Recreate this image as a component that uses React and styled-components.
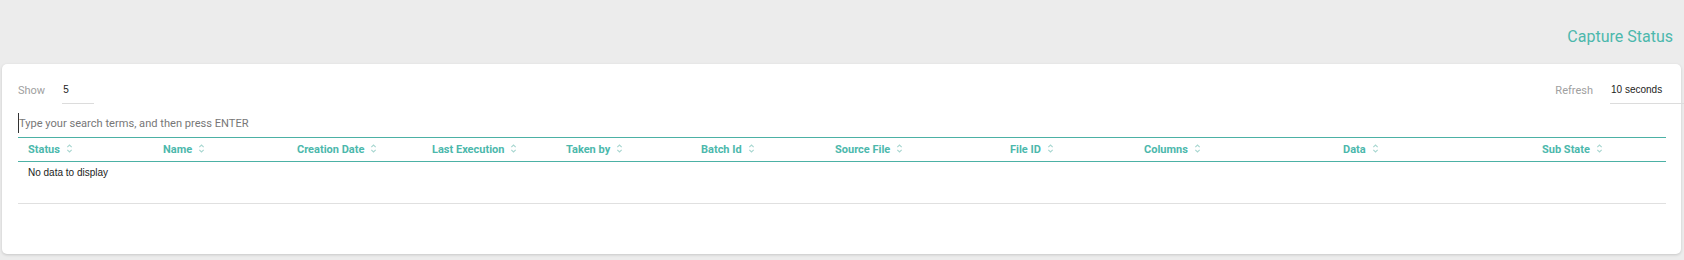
import React from 'react';
import styled, { createGlobalStyle } from 'styled-components';

const GlobalStyle = createGlobalStyle`
    body {
        margin: 0;
        background: #ececec;
        font-family: Roboto, "Liberation Sans", sans-serif;
    }
`;

const columns = [
    { label: 'Status', width: 135 },
    { label: 'Name', width: 134 },
    { label: 'Creation Date', width: 135 },
    { label: 'Last Execution', width: 134 },
    { label: 'Taken by', width: 135 },
    { label: 'Batch Id', width: 134 },
    { label: 'Source File', width: 175 },
    { label: 'File ID', width: 134 },
    { label: 'Columns', width: 199 },
    { label: 'Data', width: 199 },
    { label: 'Sub State', width: 134 },
];

function SortIcon() {
    return (
        <SortSvg viewBox="0 0 8 12" width="7" height="11">
            <path d="M1.5 4.5 L4 2 L6.5 4.5" />
            <path d="M1.5 7.5 L4 10 L6.5 7.5" />
        </SortSvg>
    );
}

function App() {
    return (
        <Page>
            <GlobalStyle />
            <TopBar>
                <Title>Capture Status</Title>
            </TopBar>
            <Card>
                <Toolbar>
                    <Group>
                        <Label>Show</Label>
                        <Select $w={32}>5</Select>
                    </Group>
                    <Group>
                        <Label>Refresh</Label>
                        <Select $w={74}>10 seconds</Select>
                    </Group>
                </Toolbar>
                <Search placeholder="Type your search terms, and then press ENTER" />
                <Table>
                    <colgroup>
                        {columns.map((c) => <Col key={c.label} $w={c.width} />)}
                    </colgroup>
                    <thead>
                        <tr>
                            {columns.map((c) => (
                                <Th key={c.label}>
                                    {c.label}
                                    <SortIcon />
                                </Th>
                            ))}
                        </tr>
                    </thead>
                    <tbody>
                        <tr>
                            <Empty colSpan={columns.length}>No data to display</Empty>
                        </tr>
                    </tbody>
                </Table>
                <Footer />
            </Card>
        </Page>
    );
}

const Page = styled.div`
    width: 1684px;
    height: 260px;
    overflow: hidden;
`;

const TopBar = styled.div`
    height: 64px;
    display: flex;
    justify-content: flex-end;
    align-items: center;
    padding-right: 11px;
    padding-top: 8px;
    box-sizing: border-box;
`;

const Title = styled.h1`
    margin: 0;
    font-size: 16px;
    font-weight: 400;
    color: #4cb8ac;
`;

const Card = styled.div`
    margin: 0 3px 0 2px;
    height: 190px;
    box-sizing: border-box;
    background: #fff;
    border-radius: 5px;
    box-shadow: 0 1px 3px rgba(0, 0, 0, 0.16);
    padding: 16px 15px 0 16px;
`;

const Toolbar = styled.div`
    display: flex;
    justify-content: space-between;
    height: 24px;
    margin-right: -18px;
`;

const Group = styled.div`
    display: flex;
    align-items: center;
    gap: 17px;
`;

const Label = styled.span`
    font-size: 11px;
    color: #a0a0a0;
    margin-top: -3px;
`;

const Select = styled.div`
    width: ${(p) => p.$w}px;
    height: 24px;
    box-sizing: border-box;
    border-bottom: 1px solid #dcdcdc;
    font-family: "Liberation Sans", Arial, sans-serif;
    font-size: 10px;
    color: #222;
    display: flex;
    align-items: center;
    padding: 0 0 4px 1px;
`;

const Search = styled.input`
    display: block;
    width: 100%;
    box-sizing: border-box;
    margin-top: 9px;
    height: 20px;
    border: none;
    border-left: 1px solid #333;
    outline: none;
    padding: 0;
    font-family: Roboto, sans-serif;
    font-size: 11.1px;
    color: #333;
    &::placeholder {
        color: #777;
    }
`;

const Table = styled.table`
    margin-top: 4px;
    border-collapse: collapse;
    table-layout: fixed;
    width: 100%;
`;

const Col = styled.col`
    width: ${(p) => p.$w}px;
`;

const Th = styled.th`
    border-top: 1px solid #4cb1a5;
    border-bottom: 1px solid #4cb1a5;
    height: 23px;
    padding: 0 0 0 10px;
    text-align: left;
    font-size: 11px;
    font-weight: 700;
    color: #4cb8ac;
    white-space: nowrap;
`;

const SortSvg = styled.svg`
    margin-left: 6px;
    vertical-align: -1px;
    fill: none;
    stroke: #a9d7d1;
    stroke-width: 1.3;
`;

const Empty = styled.td`
    height: 36px;
    vertical-align: top;
    padding: 5px 0 0 10px;
    font-family: "Liberation Sans", Arial, sans-serif;
    font-size: 10px;
    color: #222;
`;

const Footer = styled.div`
    border-top: 1px solid #e0e0e0;
`;

export default App;
